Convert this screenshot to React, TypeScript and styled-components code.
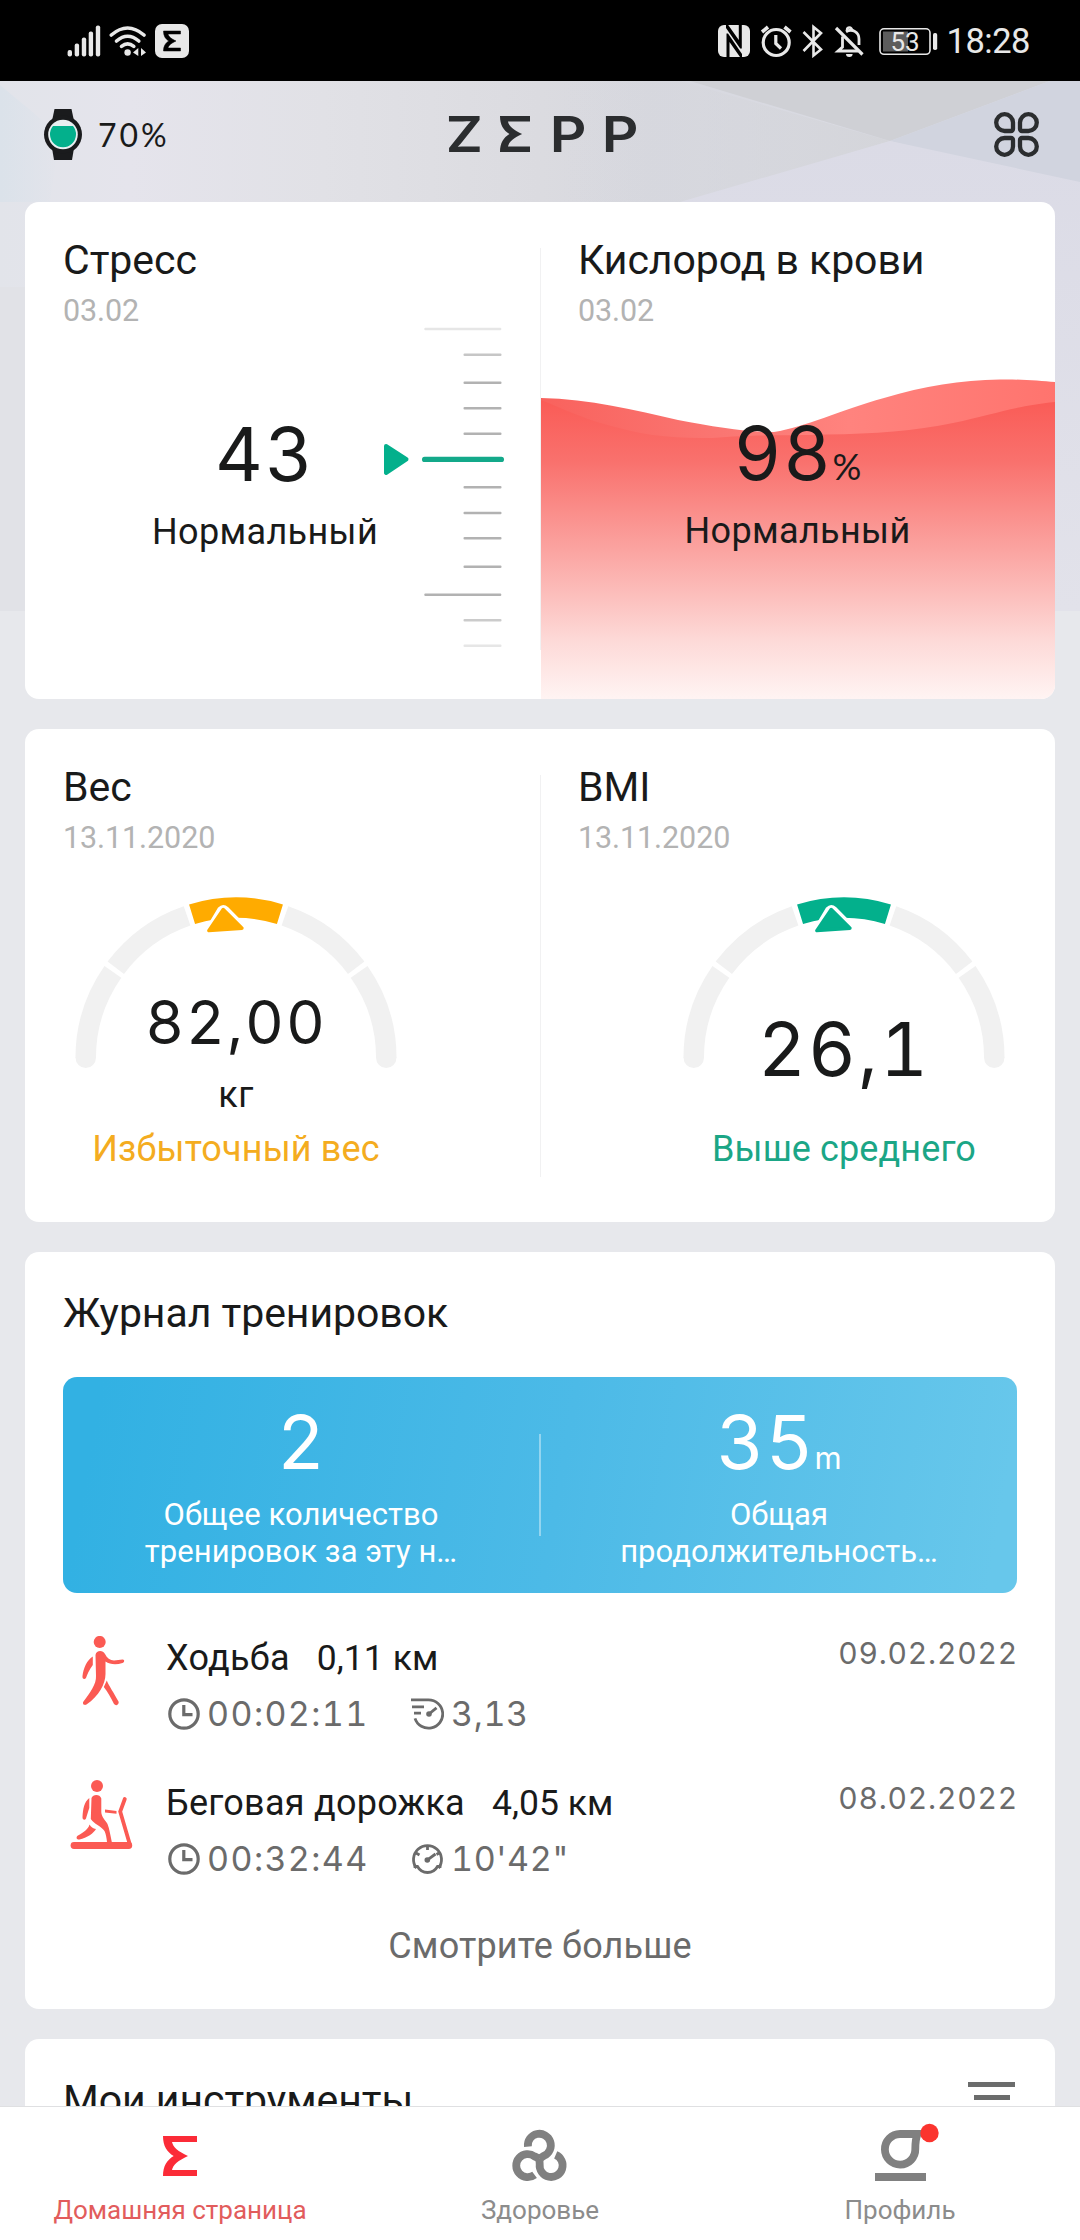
import React from "react";
import styled, { createGlobalStyle } from "styled-components";

const GlobalStyle = createGlobalStyle`
  * { box-sizing: border-box; }
  html, body { margin: 0; padding: 0; }
  body { background: #e7e8ec; }
`;

const INK = "#191a1a";
const GREEN = "#03b08c";
const AMBER = "#ffab00";
const CORAL = "#fb5a53";
const GREY = "#6b6b6b";
const TEXT_FONT = `Roboto, "Noto Sans", sans-serif`;
const DIGIT_FONT = `Inter, "DejaVu Sans", sans-serif`;

/* ---------- shell ---------- */

const Screen = styled.div`
  position: relative;
  width: 1080px;
  height: 2240px;
  overflow: hidden;
  display: flex;
  flex-direction: column;
  background: #e7e8ec;
  font-family: ${TEXT_FONT};
  color: ${INK};
`;

const StatusBar = styled.header`
  height: 81px;
  flex: none;
  background: #000;
  display: flex;
  align-items: center;
  justify-content: space-between;
  padding: 0 50px 0 67px;
  color: #e8e8e8;
`;

const StatusGroup = styled.div<{ $gap: number }>`
  display: flex;
  align-items: center;
  gap: ${(p) => p.$gap}px;
`;

const Clock = styled.span`
  font-size: 34.5px;
  line-height: 40px;
  letter-spacing: -0.5px;
  margin-left: 1px;
`;

const Backdrop = styled.svg`
  position: absolute;
  left: 0;
  top: 81px;
  z-index: 0;
`;

const TopBar = styled.div`
  position: relative;
  height: 121px;
  flex: none;
  display: grid;
  grid-template-columns: 1fr auto 1fr;
  align-items: start;
  padding: 28px 41px 0 43px;
`;

const WatchStatus = styled.div`
  display: flex;
  align-items: center;
  gap: 15px;
`;

const WatchPercent = styled.span`
  font-family: Lato, sans-serif;
  font-size: 32px;
  line-height: 51px;
  letter-spacing: 3px;
`;

const Brand = styled.div`
  display: flex;
  align-items: center;
  height: 50px;
  gap: 22px;
  color: #2b2d2f;
`;

const BrandLetter = styled.span`
  width: 30px;
  text-align: center;
  font-family: Inter, sans-serif;
  font-weight: 600;
  font-size: 49.5px;
  line-height: 50px;
  transform: scaleX(1.15);
`;

const MenuSlot = styled.div`
  display: flex;
  justify-content: flex-end;
  padding-top: 3px;
`;

const Feed = styled.main`
  position: relative;
  flex: 1;
  min-height: 0;
  overflow: hidden;
  display: flex;
  flex-direction: column;
  gap: 30px;
  padding: 0 25px;
`;

/* ---------- cards ---------- */

const Card = styled.section<{ $height: number }>`
  position: relative;
  flex: none;
  height: ${(p) => p.$height}px;
  border-radius: 14px;
  background: #fff;
  overflow: hidden;
`;

const SplitCard = styled(Card)`
  display: grid;
  grid-template-columns: 1fr 1fr;
`;

const Half = styled.div<{ $divided?: boolean }>`
  position: relative;
  display: flex;
  flex-direction: column;
  padding: 34px 38px 0;
  ${(p) =>
    p.$divided &&
    `&::before {
      content: "";
      position: absolute;
      left: 0;
      top: 46px;
      width: 1px;
      height: 402px;
      background: #f1f1f2;
    }`}
`;

const Title = styled.h2`
  margin: 0;
  font-weight: 400;
  font-size: 41px;
  line-height: 48px;
  letter-spacing: -0.05px;
  position: relative;
`;

const DateNote = styled.div`
  margin-top: 11px;
  font-size: 30.5px;
  line-height: 31px;
  margin-bottom: -1px;
  letter-spacing: -0.1px;
  color: #b3b3b3;
  position: relative;
`;

const StressBody = styled.div`
  display: flex;
  margin: 1px -38px 0;
  padding-left: 121px;
`;

const Reading = styled.div<{ $width?: number }>`
  position: relative;
  width: ${(p) => (p.$width ? `${p.$width}px` : "auto")};
  padding-top: 88px;
  display: flex;
  flex-direction: column;
  align-items: center;
`;

const Figure = styled.div<{ $size: number; $ls?: number }>`
  font-family: ${DIGIT_FONT};
  font-feature-settings: "tnum" 1;
  font-size: ${(p) => p.$size}px;
  line-height: ${(p) => (p.$size > 70 ? 80 : 66)}px;
  height: ${(p) => (p.$size > 70 ? 80 : 66)}px;
  letter-spacing: ${(p) => p.$ls ?? 0}px;
  white-space: nowrap;
`;

const Unit = styled.span<{ $size: number; $font: string }>`
  font-family: ${(p) => p.$font}, sans-serif;
  font-size: ${(p) => p.$size}px;
  line-height: 0;
  letter-spacing: 0;
`;

const Verdict = styled.div<{ $color?: string; $gap: number; $ls?: number }>`
  margin-top: ${(p) => p.$gap}px;
  font-size: 36px;
  line-height: 44px;
  letter-spacing: ${(p) => p.$ls ?? 0.35}px;
  white-space: nowrap;
  color: ${(p) => p.$color ?? INK};
`;

const WaveArt = styled.svg`
  position: absolute;
  left: 1px;
  bottom: 0;
`;

const GaugeBox = styled.div<{ $align: string }>`
  position: relative;
  align-self: ${(p) => p.$align};
  width: 346px;
  height: 279px;
  margin-top: 40px;
  display: flex;
  flex-direction: column;
  align-items: center;
  justify-content: flex-end;
`;

const GaugeArt = styled.svg`
  position: absolute;
  left: 0;
  top: 0;
`;

/* ---------- workouts ---------- */

const PaddedCard = styled(Card)`
  padding: 37px 38px 0;
`;

const Summary = styled.div`
  margin-top: 40px;
  height: 216px;
  border-radius: 14px;
  background: linear-gradient(100deg, #32b1e3 4%, #4cbae7 52%, #67c7eb 97%);
  color: #fff;
  display: flex;
  align-items: center;
`;

const SummaryCell = styled.div`
  flex: 1;
  align-self: stretch;
  padding-top: 25px;
  display: flex;
  flex-direction: column;
  align-items: center;
`;

const SummaryLabel = styled.div`
  margin-top: 14px;
  font-size: 31px;
  line-height: 37px;
  letter-spacing: 0.05px;
  text-align: center;
  white-space: pre-line;
`;

const SummaryRule = styled.div`
  width: 2px;
  height: 102px;
  background: rgba(255, 255, 255, 0.4);
`;

const WorkoutList = styled.div`
  margin-top: 43px;
  display: flex;
  flex-direction: column;
  gap: 49px;
`;

const WorkoutRow = styled.div`
  display: flex;
  height: 96px;
`;

const WorkoutIcon = styled.div`
  width: 103px;
  padding-left: 7px;
`;

const WorkoutMain = styled.div`
  flex: 1;
`;

const WorkoutTitle = styled.div`
  display: flex;
  align-items: baseline;
  gap: 27px;
  font-size: 36px;
  line-height: 44px;
  letter-spacing: 0.25px;
`;

const Distance = styled.span`
  font-size: 35.5px;
  letter-spacing: 0.05px;
`;

const WorkoutMeta = styled.div`
  margin-top: 16px;
  display: flex;
  color: ${GREY};
`;

const Metric = styled.div<{ $width?: number }>`
  display: flex;
  align-items: center;
  gap: 7px;
  width: ${(p) => (p.$width ? `${p.$width}px` : "auto")};
  padding-left: 2px;
  font-family: ${DIGIT_FONT};
  font-feature-settings: "tnum" 1;
  font-size: 34px;
  line-height: 36px;
  letter-spacing: ${(p) => (p.$width ? 1.4 : 0.6)}px;
`;

const WorkoutDate = styled.div`
  margin-right: -1px;
  font-family: ${DIGIT_FONT};
  font-feature-settings: "tnum" 1;
  font-size: 30px;
  line-height: 34px;
  letter-spacing: 0.8px;
  color: ${GREY};
`;

const SeeMore = styled.div`
  margin-top: 47px;
  text-align: center;
  font-size: 36px;
  line-height: 44px;
  letter-spacing: 0.15px;
  color: ${GREY};
`;

const ToolsHead = styled.div`
  display: flex;
  justify-content: space-between;
`;

const SortLines = styled.div`
  display: flex;
  flex-direction: column;
  align-items: center;
  gap: 8px;
  padding: 6px 2px 0 0;
`;

const SortLine = styled.i<{ $width: number }>`
  width: ${(p) => p.$width}px;
  height: 5px;
  background: #6b6c6c;
`;

/* ---------- tab bar ---------- */

const TabBar = styled.nav`
  position: relative;
  flex: none;
  height: 134px;
  border-top: 1px solid #dfe0e2;
  background: #fff;
  display: grid;
  grid-template-columns: repeat(3, 1fr);
`;

const Tab = styled.div<{ $active?: boolean }>`
  padding-top: 23px;
  display: flex;
  flex-direction: column;
  align-items: center;
  color: ${(p) => (p.$active ? "#e25c5c" : "#8c8c8c")};
`;

const TabIcon = styled.div`
  height: 51px;
  display: flex;
  align-items: center;
`;

const TabLabel = styled.span`
  margin-top: 14px;
  font-size: 26px;
  line-height: 30px;
`;

/* ---------- drawings ---------- */

const SIGMA =
  "M0 0H34V6H9C10 11 15 15.5 25 20C15 24.5 10 29 9 34H34V40H0C0 30 4 24 10.7 20C4 16 0 10 0 0Z";

const Sigma = ({ w, h, color }: { w: number; h: number; color: string }) => (
  <svg width={w} height={h} viewBox="0 0 34 40" preserveAspectRatio="none">
    <path d={SIGMA} fill={color} />
  </svg>
);

const SignalIcon = () => (
  <svg width="34" height="34" viewBox="67 23 34 34" fill="#e8e8e8">
    <rect x="67.6" y="49" width="4.4" height="6.5" rx="2" />
    <rect x="74.7" y="42.5" width="4.4" height="13" rx="2" />
    <rect x="81.8" y="36.5" width="4.4" height="19" rx="2" />
    <rect x="88.7" y="30.5" width="4.4" height="25" rx="2" />
    <rect x="95.8" y="24.5" width="4.4" height="31" rx="2" />
  </svg>
);

const WifiIcon = () => (
  <svg width="38" height="34" viewBox="109 23 38 34" fill="none" stroke="#e8e8e8" strokeWidth="3.6" strokeLinecap="round">
    <path d="M111.3 34Q127.6 20 144 34" />
    <path d="M116.5 40Q127.6 30.5 138.8 40" />
    <path d="M121.5 45.3Q127.6 40.5 133.8 45.3" />
    <circle cx="127.6" cy="51.5" r="3.2" fill="#e8e8e8" stroke="none" />
    <path d="M133 51.5L138.3 47V55ZM146 51.5L141 47V55Z" fill="#e8e8e8" stroke="none" />
  </svg>
);

const AppBadge = () => (
  <svg width="34" height="34" viewBox="0 0 34 34">
    <rect width="34" height="34" rx="7" fill="#e8e8e8" />
    <path transform="translate(8.5 7) scale(.5 .5)" d={SIGMA} fill="#000" stroke="#000" strokeWidth="1" />
  </svg>
);

const StatusIcons = () => (
  <svg width="222" height="34" viewBox="718 23 222 34" fill="none" stroke="#e8e8e8" strokeWidth="3.2">
    <rect x="718" y="24" width="32" height="32" rx="6" fill="#e8e8e8" stroke="none" />
    <path d="M726.5 56V32.5L728 32.5L742 53V56H740L729.5 41V56Z" fill="#000" stroke="none" />
    <path d="M741.8 24V47.5H740.2L726 27V24H728.2L738.8 39V24Z" fill="#000" stroke="none" />
    <circle cx="776.2" cy="41.5" r="13" />
    <path d="M775.8 34V42.5L781 47.5" />
    <path d="M762 31L768 26M784.5 26L790.5 31" strokeWidth="3.6" />
    <path d="M803.5 31L821 48.5L813.5 54.5V26L821 32L803.5 50" strokeWidth="2.6" />
    <path d="M836 27L862.5 53.5" />
    <path d="M842.5 35.5V46L838 50H858M846 30.8C852 27 859 31 859 38V44" strokeWidth="2.8" />
    <path d="M847 29a2.5 2.5 0 0 1 5 0" strokeWidth="2.4" />
    <path d="M846 53h6.6a3.3 3 0 0 1-6.6 0z" fill="#e8e8e8" stroke="none" />
    <rect x="880" y="27.8" width="50" height="25.5" rx="4" strokeWidth="1.6" />
    <rect x="883" y="30.5" width="25" height="20" fill="#5c5c5c" stroke="none" />
    <rect x="933" y="32" width="4.2" height="17" rx="1.8" fill="#e8e8e8" stroke="none" />
    <text x="905" y="50" fontFamily="Roboto, sans-serif" fontSize="26" textAnchor="middle" fill="#e8e8e8" stroke="none">
      53
    </text>
  </svg>
);

const WatchIcon = () => (
  <svg width="40" height="51" viewBox="0 0 40 51">
    <path d="M11.5 0H28.5L31 12V39L29 51H11L9 39V12Z" fill="#1a1b1d" />
    <circle cx="20" cy="25.5" r="19" fill="#1a1b1d" />
    <circle cx="20" cy="25.5" r="14.8" fill="#e8eff1" />
    <path d="M10 17H30A13 13 0 1 1 10 17Z" fill={GREEN} />
  </svg>
);

const PETAL = "M19 17V10.6A8.4 8.4 0 1 0 10.6 19H17A2 2 0 0 0 19 17Z";

const CloverIcon = () => (
  <svg width="45" height="45" viewBox="0 0 45 45" fill="none" stroke="#2b2d2f" strokeWidth="4.3">
    <path d={PETAL} />
    <path d={PETAL} transform="translate(45 0) scale(-1 1)" />
    <path d={PETAL} transform="translate(0 45) scale(1 -1)" />
    <path d={PETAL} transform="translate(45 45) scale(-1 -1)" />
  </svg>
);

const HeaderBackdrop = () => (
  <Backdrop width="1080" height="530" viewBox="0 81 1080 530">
    <defs>
      <linearGradient id="bg" x1="0" x2="1" y1="0" y2="0">
        <stop offset="0" stopColor="#e2e4ea" />
        <stop offset=".12" stopColor="#e5e4ec" />
        <stop offset=".3" stopColor="#e1e1e6" />
        <stop offset=".5" stopColor="#dbdbe0" />
        <stop offset=".6" stopColor="#d7d8df" />
        <stop offset="1" stopColor="#dcdde6" />
      </linearGradient>
      <linearGradient id="blue" x1="0" x2="1" y1="0" y2="0">
        <stop offset="0" stopColor="#dbe2ea" />
        <stop offset="1" stopColor="#dbe2ea" stopOpacity="0" />
      </linearGradient>
      <linearGradient id="side" x1="0" x2="0" y1="0" y2="1">
        <stop offset="0" stopColor="#dbdbe6" />
        <stop offset="1" stopColor="#e2e2ea" />
      </linearGradient>
      <linearGradient id="shade" x1="0" x2="1" y1="0" y2="0">
        <stop offset="0" stopColor="#d5d6dc" stopOpacity="0" />
        <stop offset="1" stopColor="#d4d5da" />
      </linearGradient>
    </defs>
    <rect y="81" width="1080" height="530" fill="url(#bg)" />
    <path d="M0 85L60 135L50 202H0Z" fill="url(#blue)" />
    <path d="M0 287H540V611H0Z" fill="#e1e2e7" />
    <path d="M680 81L890 141L690 202H560V81Z" fill="url(#shade)" />
    <path d="M690 81H1050L890 141Z" fill="#cfd0d5" />
    <path d="M1050 81H1080V187L890 141Z" fill="#d1d4df" />
    <path d="M680 202L890 141L1080 182V611H540V202Z" fill="url(#side)" />
  </Backdrop>
);

const TICKS: [number, boolean, string][] = [
  [328, true, "#e6e6e6"],
  [353.7, false, "#c6c6c6"],
  [381.7, false, "#b2b2b2"],
  [407.3, false, "#b2b2b2"],
  [432.7, false, "#b2b2b2"],
  [486.3, false, "#b2b2b2"],
  [512, false, "#b2b2b2"],
  [537.3, false, "#b2b2b2"],
  [565.7, false, "#b2b2b2"],
  [593.7, true, "#b2b2b2"],
  [619.3, false, "#cbcbcb"],
  [644.7, false, "#e6e6e6"],
];

const StressRuler = () => (
  <svg width="122" height="326" viewBox="384 325 122 326">
    {TICKS.map(([y, long, color]) => (
      <rect key={y} x={long ? 424.3 : 463.5} y={y - 1.2} width={long ? 77 : 38} height="2.5" rx="1" fill={color} />
    ))}
    <rect x="422" y="455.8" width="82" height="5.2" rx="2.6" fill="#13a98a" />
    <path d="M386 445L406.5 458.3L386 472Z" fill={GREEN} stroke={GREEN} strokeWidth="4" strokeLinejoin="round" />
  </svg>
);

const OxygenWave = () => (
  <WaveArt width="514" height="325" viewBox="541 374 514 325">
    <defs>
      <linearGradient id="front" x1="0" x2="0" y1="402" y2="699" gradientUnits="userSpaceOnUse">
        <stop offset="0" stopColor="#fa5c57" />
        <stop offset=".2" stopColor="#f9716d" />
        <stop offset=".5" stopColor="#fba4a1" />
        <stop offset=".8" stopColor="#fdd9d7" />
        <stop offset="1" stopColor="#fff4f3" />
      </linearGradient>
      <linearGradient id="back" x1="541" x2="1055" y1="0" y2="0" gradientUnits="userSpaceOnUse">
        <stop offset="0" stopColor="#f9625d" />
        <stop offset=".35" stopColor="#fa7672" />
        <stop offset=".6" stopColor="#ff837e" />
        <stop offset="1" stopColor="#ff746e" />
      </linearGradient>
    </defs>
    <path
      d="M541 398C590 399 635 410 678 420C715 427 745 432 774 432C806 427 840 410 884 398C925 386 960 380 1000 379.5C1020 379 1040 381 1055 382V450H541Z"
      fill="url(#back)"
    />
    <path
      d="M541 400C570 412 590 421 615 427C650 437 680 438 712 438C760 434 790 436 826 434.5C875 434 915 431 953 423C995 414 1015 406 1055 402V699H541Z"
      fill="url(#front)"
    />
  </WaveArt>
);

const polar = (r: number, deg: number) => {
  const a = (deg * Math.PI) / 180;
  return `${(173 + r * Math.cos(a)).toFixed(2)} ${(166 - r * Math.sin(a)).toFixed(2)}`;
};

/* Ring segment between two angles, measured counter-clockwise from the right. */
const segment = (from: number, to: number) => `M${polar(150.3, from)}A150.3 150.3 0 0 1 ${polar(150.3, to)}`;

const Gauge = ({ color }: { color: string }) => (
  <GaugeArt width="346" height="182" viewBox="0 0 346 182" fill="none">
    <g stroke="#f1f1f1" strokeWidth="20.5">
      <path d={segment(180, 145)} />
      <path d={segment(143.1, 109)} />
      <path d={segment(71, 36.9)} />
      <path d={segment(35, 0)} />
    </g>
    <path d="M12.5 165.5H33A10.25 10.5 0 0 1 12.5 165.5ZM313 165.5H333.5A10.25 10.5 0 0 1 313 165.5Z" fill="#f1f1f1" />
    <path d={segment(107, 73)} stroke={color} strokeWidth="20.5" />
    <path
      d="M158.3 18.5L147 37.5L179 35.2L162.5 18.5Q160.2 16.5 158.3 18.5Z"
      fill="#fff"
      stroke="#fff"
      strokeWidth="8.5"
      strokeLinejoin="round"
    />
    <path d="M160.2 17.5L145.8 38.6L179 36.2Z" fill={color} stroke={color} strokeWidth="3.4" strokeLinejoin="round" />
  </GaugeArt>
);

const WalkIcon = () => (
  <svg width="64" height="70" viewBox="0 0 64 70" fill={CORAL}>
    <circle cx="29.7" cy="5.9" r="6" />
    <path d="M25.5 19C26 14 33 13.5 35 18C37 22 40 24.5 44 24.6L52.5 23.5C55 23.3 54.5 26.5 52.5 27C46 29 40 28.5 35.5 25.5V38C35.5 48 29 60 16.5 68.5C14 70 12 67.5 13.5 65.5C20 57 26.5 48 26 40Z" />
    <path d="M22.8 20.5V29C19 34 17 39 16 42C14.5 44 12 43 12.5 40C13.5 32 17 24 22.8 20.5Z" />
    <path d="M36.8 44.5C39 50 44 57 48.5 65.5C49.5 68.5 46 70.5 44 68C41 62 38 56 33.8 51Z" />
  </svg>
);

const TreadmillIcon = () => (
  <svg width="64" height="70" viewBox="0 0 64 70" fill={CORAL} overflow="visible">
    <circle cx="27" cy="4.9" r="6" />
    <path d="M21.5 17C23 13 30 13 31.3 17.5V31C31.3 36 36 40 37.5 43C39.5 48 40.5 55 41.8 61H37C36.5 57 36 53 34.5 50C31 45 24 43 20.8 38Z" />
    <path d="M19.3 17V27C18 31 17 34 16 37.5C15 39.5 12.3 39 12.5 36C13 28 14 21 19.3 17Z" />
    <path d="M19.5 43.5C21 46 23 47.5 26 48C24 52 17 57 9.5 58.5C6.5 59 5.5 56 8 54.5C13 52 18.5 48 19.5 43.5Z" />
    <path d="M35 28.6L46.5 30V32.8L35 31.5Z" />
    <path d="M54.8 18L50.2 30.5L60 64" fill="none" stroke={CORAL} strokeWidth="3.8" strokeLinecap="round" />
    <rect x=".6" y="61" width="61.6" height="7" rx="3.4" />
  </svg>
);

const TimeIcon = () => (
  <svg width="32" height="32" viewBox="0 0 32 32" fill="none" stroke={GREY} strokeWidth="3.2">
    <circle cx="16" cy="16" r="14.2" />
    <path d="M15.8 7V16.6H24.5" />
  </svg>
);

const SpeedIcon = () => (
  <svg width="33" height="32" viewBox="0 0 33 32" fill="none" stroke={GREY} strokeWidth="2.8">
    <path d="M0 1.8H17.5A14.2 14.2 0 1 1 4 20.3" />
    <path d="M1 8.8H13M3 15.2H10" />
    <path d="M18 16L25.5 9.8" />
    <circle cx="18" cy="16" r="2.8" fill={GREY} stroke="none" />
  </svg>
);

const PaceIcon = () => (
  <svg width="33" height="32" viewBox="0 0 33 32" fill="none" stroke={GREY} strokeWidth="2.8">
    <path d="M5.5 25.2A14 14 0 1 1 27.5 25.2" />
    <path d="M2.6 23.5H6.5C11 31.5 22 31.5 26.5 23.5H30.4" />
    <path d="M16.5 2V7M5 10L8.5 12M28 10L25.5 11.5M16.5 16.8L24.5 11" />
    <circle cx="16.3" cy="17" r="2.8" fill={GREY} stroke="none" />
  </svg>
);

const HEALTH_ARM = "M13.9 16.6A11.5 11.5 0 1 1 30 25.8L25.4 28.8";

const HealthIcon = () => (
  <svg width="53" height="51" viewBox="0 0 53 51" fill="none" stroke="#808080" strokeWidth="7.8" overflow="visible">
    {[0, 120, 240].map((turn) => (
      <path key={turn} d={HEALTH_ARM} transform={`rotate(${turn} 25.4 28.8)`} />
    ))}
  </svg>
);

const ProfileIcon = () => (
  <svg width="51" height="51" viewBox="0 0 51 51" overflow="visible">
    <path d="M25 4H42.5C40.5 9 40.3 13 40.3 19A15.2 15.3 0 1 1 25 4Z" fill="none" stroke="#808080" strokeWidth="7.8" />
    <rect y="43" width="51" height="8" fill="#808080" />
    <circle cx="54.5" cy="3" r="9.2" fill="#fb342e" />
  </svg>
);

/* ---------- data ---------- */

const workouts = [
  {
    icon: <WalkIcon />,
    name: "Ходьба",
    distance: "0,11 км",
    time: "00:02:11",
    paceIcon: <SpeedIcon />,
    pace: "3,13",
    date: "09.02.2022",
  },
  {
    icon: <TreadmillIcon />,
    name: "Беговая дорожка",
    distance: "4,05 км",
    time: "00:32:44",
    paceIcon: <PaceIcon />,
    pace: "10'42\"",
    date: "08.02.2022",
  },
];

export default function App() {
  return (
    <Screen>
      <GlobalStyle />
      <HeaderBackdrop />
      <StatusBar>
        <StatusGroup $gap={8}>
          <SignalIcon />
          <WifiIcon />
          <AppBadge />
        </StatusGroup>
        <StatusGroup $gap={6}>
          <StatusIcons />
          <Clock>18:28</Clock>
        </StatusGroup>
      </StatusBar>

      <TopBar>
        <WatchStatus>
          <WatchIcon />
          <WatchPercent>70%</WatchPercent>
        </WatchStatus>
        <Brand>
          <BrandLetter>Z</BrandLetter>
          <Sigma w={30} h={36} color="#2b2d2f" />
          <BrandLetter>P</BrandLetter>
          <BrandLetter>P</BrandLetter>
        </Brand>
        <MenuSlot>
          <CloverIcon />
        </MenuSlot>
      </TopBar>

      <Feed>
        <SplitCard $height={497}>
          <Half>
            <Title>Стресс</Title>
            <DateNote>03.02</DateNote>
            <StressBody>
              <Reading $width={238}>
                <Figure $size={74} $ls={2}>
                  43
                </Figure>
                <Verdict $gap={16}>Нормальный</Verdict>
              </Reading>
              <StressRuler />
            </StressBody>
          </Half>
          <Half $divided>
            <OxygenWave />
            <Title>Кислород в крови</Title>
            <DateNote>03.02</DateNote>
            <Reading>
              <Figure $size={74} $ls={1.5}>
                98
                <Unit $size={36} $font="Lato">
                  %
                </Unit>
              </Figure>
              <Verdict $gap={16}>Нормальный</Verdict>
            </Reading>
          </Half>
        </SplitCard>

        <SplitCard $height={493}>
          <Half>
            <Title>Вес</Title>
            <DateNote>13.11.2020</DateNote>
            <GaugeBox $align="flex-start">
              <Gauge color={AMBER} />
              <Figure $size={60} $ls={2}>
                82,00
              </Figure>
              <Verdict $gap={18}>кг</Verdict>
              <Verdict $gap={10} $ls={0.15} $color="#f4ac20">
                Избыточный вес
              </Verdict>
            </GaugeBox>
          </Half>
          <Half $divided>
            <Title>BMI</Title>
            <DateNote>13.11.2020</DateNote>
            <GaugeBox $align="flex-end">
              <Gauge color={GREEN} />
              <Figure $size={74} $ls={2}>
                26,1
              </Figure>
              <Verdict $gap={38} $ls={0.1} $color="#1ba686">
                Выше среднего
              </Verdict>
            </GaugeBox>
          </Half>
        </SplitCard>

        <PaddedCard $height={757}>
          <Title>Журнал тренировок</Title>
          <Summary>
            <SummaryCell>
              <Figure $size={74}>2</Figure>
              <SummaryLabel>{"Общее количество\nтренировок за эту н…"}</SummaryLabel>
            </SummaryCell>
            <SummaryRule />
            <SummaryCell>
              <Figure $size={74} $ls={1}>
                35
                <Unit $size={31} $font="Inter">
                  m
                </Unit>
              </Figure>
              <SummaryLabel>{"Общая\nпродолжительность…"}</SummaryLabel>
            </SummaryCell>
          </Summary>
          <WorkoutList>
            {workouts.map((w) => (
              <WorkoutRow key={w.date}>
                <WorkoutIcon>{w.icon}</WorkoutIcon>
                <WorkoutMain>
                  <WorkoutTitle>
                    <span>{w.name}</span>
                    <Distance>{w.distance}</Distance>
                  </WorkoutTitle>
                  <WorkoutMeta>
                    <Metric $width={243}>
                      <TimeIcon />
                      {w.time}
                    </Metric>
                    <Metric>
                      {w.paceIcon}
                      {w.pace}
                    </Metric>
                  </WorkoutMeta>
                </WorkoutMain>
                <WorkoutDate>{w.date}</WorkoutDate>
              </WorkoutRow>
            ))}
          </WorkoutList>
          <SeeMore>Смотрите больше</SeeMore>
        </PaddedCard>

        <PaddedCard $height={300}>
          <ToolsHead>
            <Title>Мои инструменты</Title>
            <SortLines>
              <SortLine $width={47} />
              <SortLine $width={36} />
              <SortLine $width={25} />
            </SortLines>
          </ToolsHead>
        </PaddedCard>
      </Feed>

      <TabBar>
        <Tab $active>
          <TabIcon>
            <Sigma w={34} h={40} color="#fb2b37" />
          </TabIcon>
          <TabLabel>Домашняя страница</TabLabel>
        </Tab>
        <Tab>
          <TabIcon>
            <HealthIcon />
          </TabIcon>
          <TabLabel>Здоровье</TabLabel>
        </Tab>
        <Tab>
          <TabIcon>
            <ProfileIcon />
          </TabIcon>
          <TabLabel>Профиль</TabLabel>
        </Tab>
      </TabBar>
    </Screen>
  );
}
